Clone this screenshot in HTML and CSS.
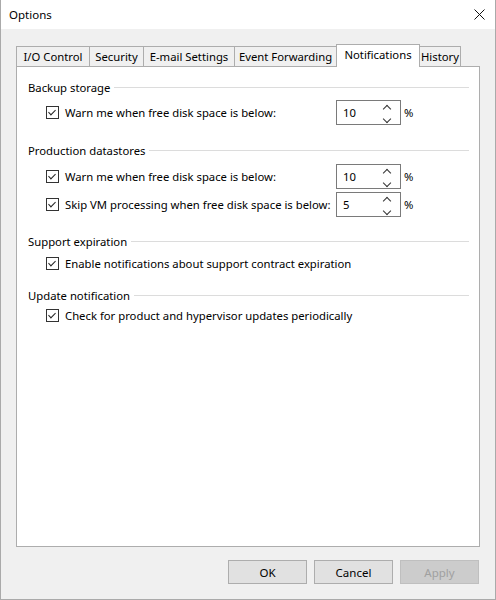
FILE: index.html
```html
<!DOCTYPE html>
<html lang="en">
<head>
  <meta charset="UTF-8" />
  <title>Options</title>
  <link rel="stylesheet" href="styles.css">
</head>
<body>
  <div class="window">
    <div class="titlebar">
      <span class="title">Options</span>
      <svg class="close" width="11" height="11" viewBox="0 0 11 11">
        <path d="M0.5 0.5 L10.5 10.5 M10.5 0.5 L0.5 10.5" stroke="#111" stroke-width="1" fill="none"/>
      </svg>
    </div>

    <div class="content">
      <div class="tabs">
        <div class="tab t-io">I/O Control</div>
        <div class="tab t-sec">Security</div>
        <div class="tab t-mail">E-mail Settings</div>
        <div class="tab t-fwd">Event Forwarding</div>
        <div class="tab t-notif active">Notifications</div>
        <div class="tab t-hist">History</div>
      </div>

      <div class="panel">
        <!-- Backup storage -->
        <div class="group">
          <div class="group-title"><span>Backup storage</span></div>
          <div class="row r-first">
            <span class="check"></span>
            <span class="label">Warn me when free disk space is below:</span>
            <div class="spin"><span class="val">10</span><span class="arrows"><i class="up"></i><i class="down"></i></span></div>
            <span class="pct">%</span>
          </div>
        </div>

        <!-- Production datastores -->
        <div class="group g-prod">
          <div class="group-title"><span>Production datastores</span></div>
          <div class="row r-prod">
            <span class="check"></span>
            <span class="label">Warn me when free disk space is below:</span>
            <div class="spin"><span class="val">10</span><span class="arrows"><i class="up"></i><i class="down"></i></span></div>
            <span class="pct">%</span>
          </div>
          <div class="row r-tight">
            <span class="check"></span>
            <span class="label">Skip VM processing when free disk space is below:</span>
            <div class="spin"><span class="val">5</span><span class="arrows"><i class="up"></i><i class="down"></i></span></div>
            <span class="pct">%</span>
          </div>
        </div>

        <!-- Support expiration -->
        <div class="group g-support">
          <div class="group-title"><span>Support expiration</span></div>
          <div class="row row-plain r-support">
            <span class="check"></span>
            <span class="label">Enable notifications about support contract expiration</span>
          </div>
        </div>

        <!-- Update notification -->
        <div class="group g-update">
          <div class="group-title"><span>Update notification</span></div>
          <div class="row row-plain r-update">
            <span class="check"></span>
            <span class="label">Check for product and hypervisor updates periodically</span>
          </div>
        </div>
      </div>

      <div class="buttons">
        <button class="btn">OK</button>
        <button class="btn">Cancel</button>
        <button class="btn disabled">Apply</button>
      </div>
    </div>
  </div>
</body>
</html>
```

FILE: styles.css
```css
body {
  margin: 0;
  font-family: "Noto Sans", "Open Sans", sans-serif;
  font-size: 11.3px;
  color: #000;
}

.window {
  width: 496px;
  height: 600px;
  box-sizing: border-box;
  border: 1px solid #aaaaaa;
  border-top: none;
  background: #f0f0f0;
  display: flex;
  flex-direction: column;
}

.titlebar {
  height: 29px;
  background: #fff;
  display: flex;
  align-items: center;
  justify-content: space-between;
  padding: 0 10px 0 8px;
}

.title {
  font-size: 11.5px;
  margin-top: -1px;
}

.close {
  margin-top: -1px;
}

.content {
  padding: 15px 15px 0 15px;
}

.tabs {
  display: flex;
  height: 22px;
  align-items: flex-end;
}

.tab {
  height: 20px;
  box-sizing: border-box;
  border: 1px solid #adadad;
  border-bottom: none;
  border-left: none;
  background: #f0f0f0;
  line-height: 19px;
  text-align: center;
  white-space: nowrap;
}

.t-io { width: 74px; border-left: 1px solid #adadad; }
.t-sec { width: 54px; }
.t-mail { width: 91px; }
.t-fwd { width: 102px; }
.t-hist { width: 42px; }

.tab.active {
  width: 84px;
  height: 23px;
  background: #fff;
  border-left: 1px solid #adadad;
  margin-left: -1px;
  margin-right: -1px;
  margin-bottom: -1px;
  position: relative;
  z-index: 1;
  line-height: 20px;
}

.tab.active + .tab {
  border-left: 1px solid #adadad;
}

.panel {
  height: 481px;
  box-sizing: border-box;
  border: 1px solid #adadad;
  background: #fff;
  padding: 12px 10px 0 11px;
}

.group-title {
  display: flex;
  align-items: center;
  height: 16px;
}

.group-title::after {
  content: "";
  flex: 1;
  height: 1px;
  background: #dcdcdc;
  margin-left: 4px;
}

.row {
  display: flex;
  align-items: center;
  height: 25px;
  padding-left: 18px;
}

.row-plain {
  height: 18px;
}

.r-first { margin-top: 5px; }
.r-prod { margin-top: 6px; }
.r-tight { margin-top: 3px; }
.r-support { margin-top: 5px; }
.r-update { margin-top: 3px; }

.g-prod { margin-top: 17px; }
.g-support { margin-top: 16px; }
.g-update { margin-top: 15px; }

.check {
  width: 13px;
  height: 13px;
  box-sizing: border-box;
  border: 1px solid #333;
  background: #fff;
  margin-right: 6px;
  flex: none;
  position: relative;
}

.check::after {
  content: "";
  position: absolute;
  left: 3px;
  top: 1px;
  width: 3px;
  height: 6px;
  border: solid #222;
  border-width: 0 1.5px 1.5px 0;
  transform: rotate(45deg);
}

.label {
  flex: 1;
  min-width: 0;
  white-space: nowrap;
}

.spin {
  width: 65px;
  height: 25px;
  box-sizing: border-box;
  border: 1px solid #7a7a7a;
  display: flex;
  align-items: center;
  justify-content: space-between;
  padding: 0 10px 0 6px;
  margin-right: 3px;
  background: #fff;
}

.arrows {
  display: flex;
  flex-direction: column;
  gap: 4px;
}

.arrows i {
  display: block;
  width: 5px;
  height: 5px;
  border: solid #333;
  border-width: 1px 0 0 1px;
}

.arrows .up {
  transform: rotate(45deg);
  margin-top: 2px;
}

.arrows .down {
  transform: rotate(225deg);
}

.pct {
  width: 13px;
  margin-right: 52px;
}

.buttons {
  display: flex;
  justify-content: flex-end;
  gap: 7px;
  margin-top: 13px;
  padding-right: 1px;
}

.btn {
  width: 79px;
  height: 24px;
  font-family: "Noto Sans", "Open Sans", sans-serif;
  font-size: 11.5px;
  background: #e1e1e1;
  border: 1px solid #adadad;
  color: #000;
  padding: 0;
}

.btn.disabled {
  background: #cccccc;
  border-color: #bfbfbf;
  color: #a0a0a0;
}
```
